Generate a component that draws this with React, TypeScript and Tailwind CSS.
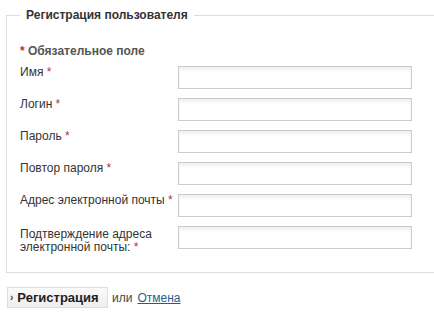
import React from 'react';

const fields = [
  { label: 'Имя', type: 'text' },
  { label: 'Логин', type: 'text' },
  { label: 'Пароль', type: 'password' },
  { label: 'Повтор пароля', type: 'password' },
  { label: 'Адрес электронной почты', type: 'email' },
];

const Star = () => <span className="text-[#b0343a]"> *</span>;

const inputCls =
  'mt-[2px] w-[234px] h-[23px] border border-[#cccccc] bg-white shadow-[inset_0_3px_3px_rgba(0,0,0,0.06)] outline-none';

const App: React.FC = () => {
  return (
    <div className="w-[434px] h-[317px] overflow-hidden bg-white pl-[6px] pt-[7px] font-['Liberation_Sans',Arial,sans-serif] text-[12px] text-[#333]">
      {/* Fieldset */}
      <fieldset className="w-[460px] border border-[#dddddd] pl-[13px] pb-[18px]">
        <legend className="ml-0 px-[6px] font-bold text-[12px] leading-[16px] text-[#333]">
          Регистрация пользователя
        </legend>

        <p className="mt-[20px] font-bold text-[12px] text-[#555] leading-[16px]">
          <span className="text-[#b0343a]">*</span> Обязательное поле
        </p>

        <div className="mt-[5px] flex flex-col gap-[7px]">
          {fields.map((f) => (
            <div key={f.label} className="flex items-start">
              <label className="w-[158px] shrink-0 whitespace-nowrap leading-[16px]">
                {f.label}
                <Star />
              </label>
              <input type={f.type} className={inputCls} />
            </div>
          ))}
          <div className="flex items-start">
            <label className="w-[158px] shrink-0 mt-[4px] leading-[13px]">
              Подтверждение адреса
              <br />
              электронной почты:
              <Star />
            </label>
            <input type="email" className={inputCls} />
          </div>
        </div>
      </fieldset>

      {/* Actions */}
      <div className="mt-[14px] flex items-center">
        <button className="ml-[1px] h-[21px] w-[101px] flex items-center border border-[#dddddd] bg-gradient-to-b from-[#fafafa] to-[#eeeeee] pl-[2px] font-bold text-[13px] text-[#222]">
          <span className="text-[10px] text-[#444] mr-[4px]">›</span>
          Регистрация
        </button>
        <span className="ml-[4px] text-[12px] text-[#444]">или</span>
        <a href="#" className="ml-[5px] text-[12px] text-[#1f5f8f] underline">
          Отмена
        </a>
      </div>
    </div>
  );
};

export default App;
